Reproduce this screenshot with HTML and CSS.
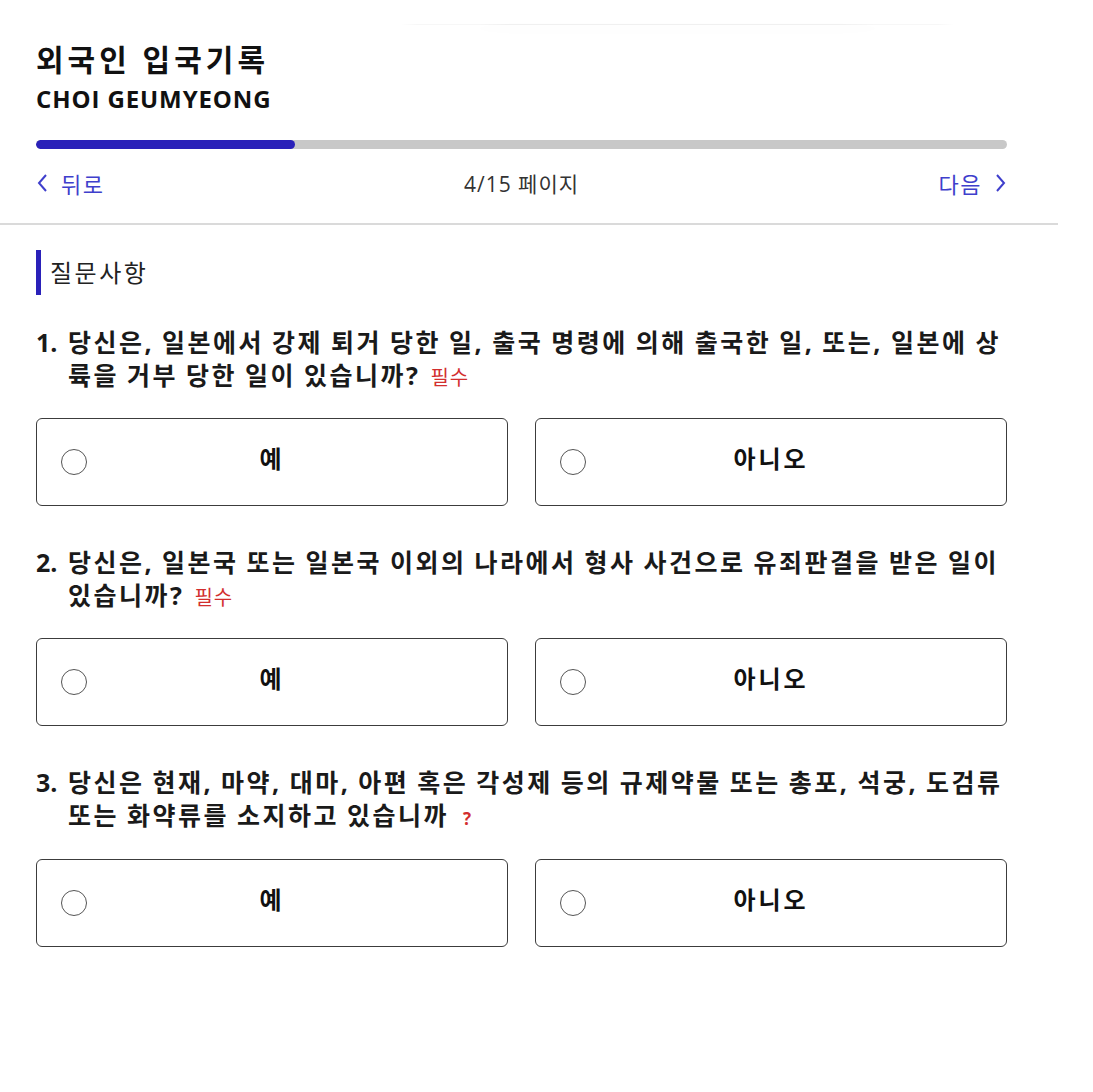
FILE: index.html
```html
<!DOCTYPE html>
<html lang="ko">
<head>
    <meta charset="UTF-8">
    <meta name="viewport" content="width=device-width, initial-scale=1.0">
    <title>외국인 입국기록</title>
    <link rel="stylesheet" href="styles.css">
</head>
<body>
    <div class="page">
        <div class="top-shadow"></div>
        <header class="header">
            <h1 class="title">외국인 입국기록</h1>
            <div class="name">CHOI GEUMYEONG</div>

            <div class="progress">
                <div class="progress-fill" style="width: 26.67%;"></div>
            </div>

            <nav class="pager">
                <a class="pager-link" href="#">
                    <svg width="12" height="20" viewBox="0 0 12 20"><polyline points="10,2 3,10 10,18" fill="none" stroke="currentColor" stroke-width="2"/></svg>
                    <span>뒤로</span>
                </a>
                <span class="pager-count">4/15 페이지</span>
                <a class="pager-link pager-next" href="#">
                    <span>다음</span>
                    <svg width="12" height="20" viewBox="0 0 12 20"><polyline points="2,2 9,10 2,18" fill="none" stroke="currentColor" stroke-width="2"/></svg>
                </a>
            </nav>
        </header>

        <main class="content">
            <h2 class="section-title">질문사항</h2>

            <div class="question">
                <p class="q-text"><span class="q-num">1.</span><span>당신은, 일본에서 강제 퇴거 당한 일, 출국 명령에 의해 출국한 일, 또는, 일본에 상륙을 거부 당한 일이 있습니까?<em class="required">필수</em></span></p>
                <div class="options">
                    <label class="option"><span class="radio"></span><span class="option-label">예</span></label>
                    <label class="option"><span class="radio"></span><span class="option-label">아니오</span></label>
                </div>
            </div>

            <div class="question">
                <p class="q-text"><span class="q-num">2.</span><span>당신은, 일본국 또는 일본국 이외의 나라에서 형사 사건으로 유죄판결을 받은 일이 있습니까?<em class="required">필수</em></span></p>
                <div class="options">
                    <label class="option"><span class="radio"></span><span class="option-label">예</span></label>
                    <label class="option"><span class="radio"></span><span class="option-label">아니오</span></label>
                </div>
            </div>

            <div class="question">
                <p class="q-text"><span class="q-num">3.</span><span>당신은 현재, 마약, 대마, 아편 혹은 각성제 등의 규제약물 또는 총포, 석궁, 도검류 또는 화약류를 소지하고 있습니까<em class="required mark">?</em></span></p>
                <div class="options">
                    <label class="option"><span class="radio"></span><span class="option-label">예</span></label>
                    <label class="option"><span class="radio"></span><span class="option-label">아니오</span></label>
                </div>
            </div>
        </main>
    </div>
</body>
</html>
```

FILE: styles.css
```css
body {
    margin: 0;
    background: #fff;
    color: #111;
    font-family: "Open Sans", "Noto Sans CJK KR", sans-serif;
}
.page {
    width: 1058px;
}
.top-shadow {
    width: 565px;
    height: 1px;
    margin: 24px 0 0 395px;
    background: #f0f0f0;
    box-shadow: 0 4px 10px rgba(0, 0, 0, 0.08);
    border-radius: 50%;
}
.header {
    padding: 17px 51px 26px 36px;
    border-bottom: 2px solid #dadada;
}
.title {
    margin: 0;
    font-size: 30px;
    line-height: 36px;
    font-weight: 700;
    letter-spacing: 4px;
}
.name {
    margin-top: 6px;
    font-size: 24px;
    line-height: 30px;
    font-weight: 700;
    letter-spacing: 0.9px;
}
.progress {
    margin-top: 26px;
    height: 9px;
    border-radius: 5px;
    background: #c8c8c8;
    overflow: hidden;
}
.progress-fill {
    height: 100%;
    border-radius: 5px;
    background: #2a21b9;
}
.pager {
    margin-top: 20px;
    height: 28px;
    display: flex;
    justify-content: space-between;
    align-items: center;
    font-size: 22px;
    letter-spacing: 1.5px;
}
.pager-link {
    display: flex;
    align-items: center;
    gap: 13px;
    color: #3f3fcc;
    text-decoration: none;
}
.pager-count {
    color: #333;
    font-size: 21px;
    letter-spacing: 1px;
}
.content {
    padding: 25px 51px 40px 36px;
}
.section-title {
    margin: 0;
    padding-left: 9px;
    border-left: 5px solid #2a21b9;
    font-size: 24px;
    line-height: 45px;
    font-weight: 400;
    letter-spacing: 2.5px;
    color: #222;
}
.question {
    margin-top: 31px;
}
.question + .question {
    margin-top: 40px;
}
.q-text {
    margin: 0;
    display: flex;
    font-size: 25px;
    line-height: 33px;
    font-weight: 700;
    letter-spacing: 2.5px;
    word-spacing: -1px;
    color: #1a1a1a;
}
.q-num {
    flex: none;
    width: 32px;
    letter-spacing: 0;
}
.required {
    margin-left: 10px;
    font-style: normal;
    font-weight: 400;
    font-size: 20px;
    letter-spacing: 1px;
    color: #d22e2e;
}
.required.mark {
    margin-left: 14px;
    font-weight: 700;
    font-size: 17px;
}
.options {
    margin-top: 24px;
    display: grid;
    grid-template-columns: 1fr 1fr;
    gap: 27px;
}
.option {
    height: 88px;
    box-sizing: border-box;
    border: 1.5px solid #3c3c3c;
    border-radius: 6px;
    padding: 0 24px;
    display: grid;
    grid-template-columns: 1fr auto 1fr;
    align-items: center;
    cursor: pointer;
}
.radio {
    width: 26px;
    height: 26px;
    box-sizing: border-box;
    border: 1.5px solid #555;
    border-radius: 50%;
}
.option-label {
    font-size: 24px;
    font-weight: 700;
    letter-spacing: 3px;
    margin-top: -10px;
    color: #111;
}
```
